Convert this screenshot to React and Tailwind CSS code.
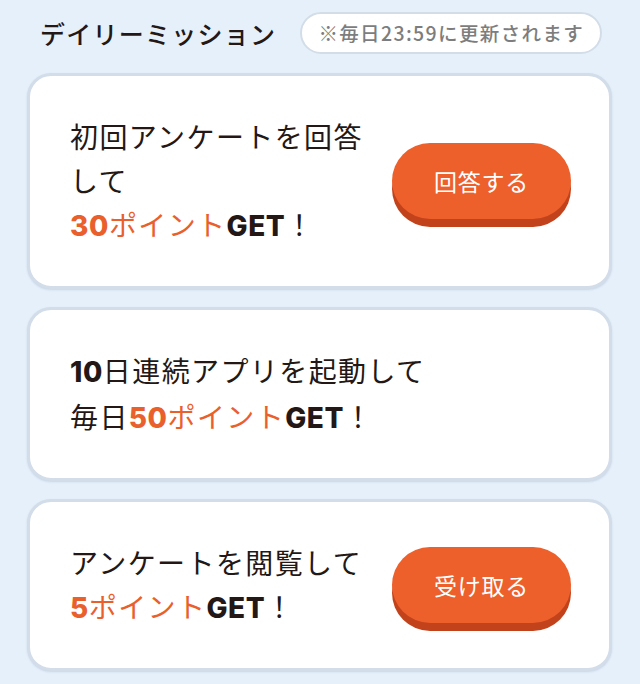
import React from "react";

const jp = { fontFamily: '"Noto Sans CJK JP", "Noto Sans", sans-serif' };
const lat = { fontFamily: 'Inter, "Liberation Sans", "Noto Sans CJK JP", sans-serif' };

function Num({ children, orange }) {
  return (
    <span
      className={`font-extrabold tracking-[0.02em] ${orange ? "text-[#e9602c]" : "text-[#231815]"}`}
      style={lat}
    >
      {children}
    </span>
  );
}

function Orange({ children }) {
  return <span className="text-[#e9602c]">{children}</span>;
}

function ActionButton({ label }) {
  return (
    <button
      className="shrink-0 w-[179px] h-[76px] rounded-full bg-[#ed5f2b] text-white text-[23px] font-normal tracking-[0.03em] shadow-[0_8px_0_#c2431b]"
      style={jp}
    >
      {label}
    </button>
  );
}

function Card({ children, button }) {
  return (
    <div className="flex items-center gap-[12px] bg-white border-[3px] border-[#d2dde9] rounded-[24px] pl-[40px] pr-[38px] py-[38px] shadow-[0_1px_2px_rgba(120,140,170,0.25)]">
      <div className="flex-1 text-[28px] leading-[44px] tracking-[0.05em] text-[#231815]">
        {children}
      </div>
      {button && <ActionButton label={button} />}
    </div>
  );
}

export default function App() {
  return (
    <div className="w-[640px] h-[684px] bg-[#e6f0fb] pl-[27px] pr-[28px] pt-[12px]" style={jp}>
      <div className="flex items-center gap-[24px] pl-[13px]">
        <h2 className="text-[25px] font-medium tracking-[0.05em] text-[#231815] leading-[42px]">
          デイリーミッション
        </h2>
        <div className="h-[42px] w-[302px] flex items-center justify-center rounded-full bg-white border-2 border-[#d3dde8] text-[19.5px] font-medium text-[#7d7d7d] tracking-[0.07em]">
          ※毎日23:59に更新されます
        </div>
      </div>

      <div className="mt-[19px] flex flex-col gap-[18px]">
        <Card button="回答する">
          初回アンケートを回答して
          <br />
          <Num orange>30</Num>
          <Orange>ポイント</Orange>
          <Num>GET</Num>！
        </Card>
        <Card>
          <Num>10</Num>日連続アプリを起動して
          <br />
          毎日<Num orange>50</Num>
          <Orange>ポイント</Orange>
          <Num>GET</Num>！
        </Card>
        <Card button="受け取る">
          アンケートを閲覧して
          <br />
          <Num orange>5</Num>
          <Orange>ポイント</Orange>
          <Num>GET</Num>！
        </Card>
      </div>
    </div>
  );
}
